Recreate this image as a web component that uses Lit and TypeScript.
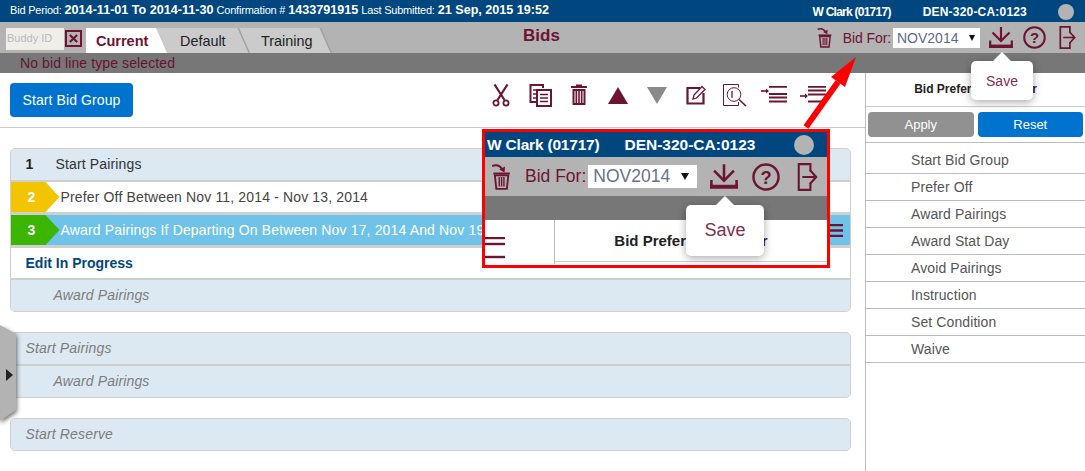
import { LitElement, html, css, svg } from "lit";
import { customElement } from "lit/decorators.js";

const M = "#6e1433";
const box = (w: number, h: number, vw: number, vh: number, body: unknown) =>
  html`<svg width=${w} height=${h} viewBox="0 0 ${vw} ${vh}" fill="none" stroke=${M}>${body}</svg>`;

const scissors = () => box(18, 23, 18, 23, svg`<path d="M2.5 0.5 L12.5 16 M15.5 0.5 L5.5 16" stroke-width="2.2"/><circle cx="4" cy="19" r="2.6" stroke-width="1.8"/><circle cx="14" cy="19" r="2.6" stroke-width="1.8"/>`);
const copy = () => box(23, 23, 23, 23, svg`<path d="M14 4V1H1.5V18H7" stroke-width="2"/><path d="M4 6h5M4 10h3M4 14h3" stroke-width="1.4"/><rect x="8" y="6" width="14" height="16" fill="#fff" stroke-width="2"/><path d="M11 10.5h8M11 14h8M11 17.5h8" stroke-width="1.6"/>`);
const trash = () => box(16, 22, 16, 22, svg`<path d="M0 3h16M5 1.5h6" stroke-width="2"/><rect x="1.5" y="5" width="13" height="16" fill=${M} stroke="none"/><path d="M4 7v12M6.7 7v12M9.3 7v12M12 7v12" stroke="#fff" stroke-width="1"/>`);
const up = () => box(20, 17, 20, 17, svg`<path d="M10 0L20 17H0Z" fill=${M} stroke="none"/>`);
const down = () => box(20, 17, 20, 17, svg`<path d="M0 0H20L10 17Z" fill="#8a8a8a" stroke="none"/>`);
const edit = () => box(20, 20, 20, 20, svg`<path d="M14 3H1.5V18.5H17.5V8" stroke-width="2.2"/><path d="M7 14l1-4L16 1.5l3 3L10.5 13Z" fill="#fff" stroke-width="1.3"/>`);
const search = () => box(25, 23, 25, 23, svg`<path d="M15.5 3.5V0.5H0.5V21.5H15.5V18" stroke-width="1"/><circle cx="11" cy="10.5" r="6.8" stroke-width="1"/><path d="M16 15.5L23 22" stroke-width="1.7"/><path d="M9 7v7" stroke-width="1.3"/>`);
const indentA = () => box(26, 18, 26, 18, svg`<path d="M8 0.8H26M8 8H26M8 11.5H26M8 15.5H26" stroke-width="2"/><path d="M0 5h6" stroke-width="1.6"/><path d="M5 2.5L8 5L5 7.5Z" fill=${M} stroke="none"/>`);
const indentB = () => box(26, 18, 26, 18, svg`<path d="M8 0.8H26M8 4.5H26M8 8.5H26M8 15.5H26" stroke-width="2"/><path d="M0 10h6" stroke-width="1.6"/><path d="M5 7.5L8 10L5 12.5Z" fill=${M} stroke="none"/>`);
const undoTrash = (w = 17, h = 21) => box(w, h, 17, 23, svg`<path d="M1 2.5C5 1 8 2.5 10 6" stroke-width="1.8"/><path d="M7 5.5L11.5 8L12 3Z" fill=${M} stroke="none"/><path d="M2 9h14" stroke-width="1.8"/><path d="M3.3 10.5L4.5 22H13.5L14.7 10.5Z" stroke-width="1.6"/><path d="M7 12v8M9 12v8M11 12v8" stroke-width="1.2"/>`);
const save = (w = 24, h = 21) => box(w, h, 24, 21, svg`<path d="M12 0V13" stroke-width="2.2"/><path d="M3.5 5.5L12 14L20.5 5.5" stroke-width="2.2"/><path d="M1.2 13.5V19H22.8V13.5" stroke-width="2.2"/><path d="M0 19.3H24" stroke-width="3.4"/>`);
const help = (w = 23, h = 23) => box(w, h, 23, 23, svg`<circle cx="11.5" cy="11.5" r="10.3" stroke-width="2"/><text x="11.5" y="17" text-anchor="middle" font-family="Liberation Sans" font-weight="700" font-size="15" fill=${M} stroke="none">?</text>`);
const exit = (w = 17, h = 23) => box(w, h, 17, 24, svg`<path d="M11 7V1H1V23H11V17" stroke-width="1.8"/><path d="M4 12H16M10.5 6L16 12L10.5 18" stroke-width="1.8"/>`);
const burger = (w: number, h: number, ys: number[], t = 2.4) => box(w, h, w, h, ys.map((y) => svg`<path d="M0 ${y}H${w}" stroke-width=${t}/>`));

@customElement("app-root")
export class AppRoot extends LitElement {
  static styles = css`
    :host { display: block; position: relative; width: 1085px; height: 471px; overflow: hidden; background: #fff; font-family: "Liberation Sans", Arial, sans-serif; color: #333; }
    svg { display: block; flex: none; }
    .top { height: 22px; background: #00477f; color: #fff; display: flex; align-items: center; padding: 0 0 3px 10px; box-sizing: border-box; }
    .s { font-size: 11px; letter-spacing: -0.2px; margin-right: 3px; }
    .b { font-size: 12.6px; font-weight: 700; margin-right: 3px; }
    .who { display: flex; align-items: center; align-self: flex-start; margin: 3px 0 0 auto; height: 17px; font-size: 12px; font-weight: 700; letter-spacing: -0.75px; padding-right: 11px; }
    .den { margin-left: 32px; letter-spacing: 0.2px; }
    .dot { width: 16px; height: 16px; border-radius: 50%; background: #b3b3b3; margin-left: 31px; }
    .bar2 { height: 31px; background: #b3b3b3; display: flex; align-items: flex-end; padding-left: 6px; box-sizing: border-box; position: relative; }
    .buddy { width: 58px; height: 22px; background: #efefe8; color: #b9b9b9; font-size: 11px; line-height: 21px; padding-left: 1px; box-sizing: border-box; align-self: flex-start; margin-top: 6px; }
    .x { width: 17px; height: 17px; border: 2px solid #6e1433; box-sizing: border-box; background: #b3b3b3; align-self: flex-start; margin: 8px 0 0 1px; display: flex; align-items: center; justify-content: center; }
    .tabs { display: flex; margin-left: 4px; height: 25px; }
    .tab { height: 25px; display: flex; align-items: center; font-size: 14.4px; color: #222; background: #a0a0a0; position: relative; clip-path: polygon(0 0, calc(100% - 11px) 0, 100% 100%, 0 100%); }
    .tab::before { content: ""; position: absolute; inset: 0; background: #cbcbcb; clip-path: polygon(0 0, calc(100% - 12.5px) 0, calc(100% - 1.5px) 100%, 0 100%); }
    .tab span { position: relative; }
    .tab.on { width: 81px; z-index: 3; background: #fff; padding-left: 10px; box-sizing: border-box; }
    .tab.on::before { background: #fff; }
    .tab.on span { font-weight: 700; color: #6e1433; font-size: 14.5px; }
    .tab.d { width: 94px; margin-left: -11px; padding-left: 24px; box-sizing: border-box; z-index: 2; }
    .tab.t { width: 93px; margin-left: -11px; padding-left: 22px; box-sizing: border-box; z-index: 1; }
    .title { position: absolute; left: 523px; top: 4px; font-size: 17px; font-weight: 700; color: #6e1433; }
    .tools { display: flex; align-items: center; margin-left: auto; align-self: stretch; padding-right: 9px; }
    .bidfor { font-size: 14px; color: #6e1433; margin-left: 10px; letter-spacing: -0.1px; }
    .sel { width: 87px; height: 20px; background: #fff; margin: 0 9px 0 2px; display: flex; align-items: center; justify-content: space-between; font-size: 14px; color: #5d6a8c; padding: 0 5px 0 4px; box-sizing: border-box; }
    .caret { width: 0; height: 0; border: 3.5px solid transparent; border-top: 6px solid #111; border-bottom: 0; }
    .gap1 { margin-left: 10px; }
    .gap2 { margin-left: 13px; }
    .bar3 { height: 20px; background: #777; color: #651334; font-size: 14px; line-height: 20px; padding-left: 20px; letter-spacing: 0.1px; }
    .main { display: flex; height: 398px; }
    .left { width: 865px; flex: none; }
    .tb { height: 55px; border-bottom: 1px solid #ccc; box-sizing: border-box; display: flex; align-items: flex-start; justify-content: space-between; padding: 10px 32.5px 0 10px; }
    .start { width: 123px; height: 34px; border-radius: 4px; background: #0073cf; color: #fff; font-size: 14px; letter-spacing: 0.1px; display: flex; align-items: center; justify-content: center; }
    .icons { display: flex; }
    .cell { width: 39px; height: 24px; display: flex; align-items: center; justify-content: center; }
    .groups { padding: 20px 14px 0 9.5px; display: flex; flex-direction: column; }
    .group { border: 1px solid #d0d0d0; border-radius: 5px; overflow: hidden; margin-bottom: 20px; background: #dce8f2; }
    .r { height: 33px; display: flex; align-items: center; font-size: 14px; letter-spacing: 0.15px; position: relative; box-sizing: border-box; white-space: nowrap; }
    .h31 { height: 31px; padding-bottom: 1px; }
    .h32 { height: 32px; }
    .sep { border-top: 2px solid #cfcfcf; }
    .sep3 { border-top: 3px solid #cfcfcf; }
    .blue { background: #dce8f2; }
    .w { background: #fff; }
    .sky { background: #6fc3e8; color: #fff; }
    .num { width: 45px; padding-left: 15px; box-sizing: border-box; font-weight: 700; color: #222; }
    .ital { font-style: italic; color: #7d7d7d; }
    .i1 { padding-left: 15px; }
    .i2 { padding: 0 0 1px 43px; }
    .badge { width: 49px; align-self: stretch; display: flex; align-items: center; padding-left: 17px; box-sizing: border-box; color: #fff; font-weight: 700; clip-path: polygon(0 0, 35px 0, 49px 50%, 35px 100%, 0 100%); margin-right: 1px; flex: none; }
    .yellow { background: #f2c500; }
    .green { background: #3cb500; }
    .gray { color: #444; }
    .edit { font-weight: 700; color: #00477f; padding-left: 15px; letter-spacing: 0; }
    .rb { position: absolute; right: 7px; top: 9px; }
    .side { flex: 1; border-left: 1px solid #bbb; box-sizing: border-box; }
    .sh { height: 34px; border-bottom: 1px solid #ccc; box-sizing: border-box; padding-bottom: 2px; display: flex; align-items: center; justify-content: center; font-size: 12px; font-weight: 700; color: #222; }
    .btns { display: flex; gap: 4px; padding: 5px 2px; height: 36px; box-sizing: border-box; border-bottom: 1px solid #bbb; }
    .btn { flex: 1; height: 25px; border-radius: 4px; color: #fff; font-size: 13px; display: flex; align-items: center; justify-content: center; }
    .apply { background: #919191; }
    .reset { background: #0073cf; }
    .list { padding-top: 4px; }
    .li { height: 27px; border-bottom: 1px solid #bbb; box-sizing: border-box; padding-left: 45px; font-size: 14px; letter-spacing: 0.1px; color: #555; line-height: 26px; }
    .tip { position: absolute; background: #fff; border-radius: 5px; box-shadow: 0 2px 8px rgba(0,0,0,.35); color: #7f2f4f; display: flex; align-items: center; justify-content: center; z-index: 5; }
    .tip::before { content: ""; position: absolute; left: 50%; top: -9px; margin-left: -10px; border: 10px solid transparent; border-top: 0; border-bottom: 10px solid #fff; }
    .tip1 { left: 971px; top: 61px; width: 62px; height: 39px; font-size: 14px; }
    .tip2 { left: 686px; top: 205px; width: 78px; height: 51px; font-size: 18px; z-index: 7; }
    .shot { position: absolute; left: 482px; top: 129px; width: 348px; height: 139px; border: 3px solid #f00; box-sizing: border-box; background: #fff; z-index: 6; overflow: hidden; }
    .st { height: 25px; background: #00477f; color: #fff; display: flex; align-items: center; font-size: 15.5px; font-weight: 700; padding-left: 2px; letter-spacing: -0.2px; white-space: nowrap; }
    .den2 { margin-left: 25px; letter-spacing: 0; }
    .dot2 { width: 20px; height: 20px; border-radius: 50%; background: #b3b3b3; margin-left: 39px; flex: none; }
    .sg { height: 39px; background: #b3b3b3; display: flex; align-items: center; padding-left: 6px; }
    .bf { font-size: 17.5px; color: #6e1433; margin-left: 14px; }
    .sl { width: 109px; height: 23px; background: #fff; margin: 0 13px 0 2px; display: flex; align-items: center; justify-content: space-between; padding: 0 5px; box-sizing: border-box; font-size: 17.5px; color: #6a7088; }
    .sl .caret { border-width: 4px; border-top-width: 7px; margin-right: 3px; border-bottom: 0; }
    .gap3 { margin-left: 14px; }
    .gap4 { margin-left: 17px; }
    .sd { height: 24px; background: #777; }
    .sb { display: flex; height: 44px; background: #fff; }
    .l { width: 70px; flex: none; border-right: 1px solid #bbb; padding-top: 17px; box-sizing: border-box; }
    .rr { flex: 1; }
    .hh { height: 42px; border-bottom: 1px solid #ccc; box-sizing: border-box; display: flex; align-items: center; justify-content: center; font-size: 15px; font-weight: 700; color: #222; white-space: nowrap; }
    .arrow { position: absolute; left: 795px; top: 50px; z-index: 8; }
    .handle { position: absolute; left: 0; top: 322px; z-index: 4; filter: drop-shadow(1px 2px 2px rgba(0,0,0,.55)); }
  `;

  render() {
    const list = ["Start Bid Group", "Prefer Off", "Award Pairings", "Award Stat Day", "Avoid Pairings", "Instruction", "Set Condition", "Waive"];
    return html`
      <div class="top">
        <span class="s">Bid Period:</span><span class="b">2014-11-01 To 2014-11-30</span>
        <span class="s">Confirmation #</span><span class="b">1433791915</span>
        <span class="s">Last Submitted:</span><span class="b">21 Sep, 2015 19:52</span>
        <div class="who"><span>W Clark (01717)</span><span class="den">DEN-320-CA:0123</span><span class="dot"></span></div>
      </div>
      <div class="bar2">
        <div class="buddy">Buddy ID</div>
        <div class="x">${box(9, 9, 10, 10, svg`<path d="M1 1L9 9M9 1L1 9" stroke-width="2.4"/>`)}</div>
        <div class="tabs">
          <div class="tab on"><span>Current</span></div>
          <div class="tab d"><span>Default</span></div>
          <div class="tab t"><span>Training</span></div>
        </div>
        <div class="title">Bids</div>
        <div class="tools">
          ${undoTrash()}
          <span class="bidfor">Bid For:</span>
          <div class="sel"><span>NOV2014</span><i class="caret"></i></div>
          ${save()}
          <span class="gap1">${help()}</span>
          <span class="gap2">${exit()}</span>
        </div>
      </div>
      <div class="bar3">No bid line type selected</div>
      <div class="main">
        <div class="left">
          <div class="tb">
            <div class="start">Start Bid Group</div>
            <div class="icons">
              ${[scissors, copy, trash, up, down, edit, search, indentA, indentB].map((i) => html`<div class="cell">${i()}</div>`)}
            </div>
          </div>
          <div class="groups">
            <div class="group">
              <div class="r h31 blue"><span class="num">1</span>Start Pairings</div>
              <div class="r h32 w sep gray"><div class="badge yellow">2</div>Prefer Off Between Nov 11, 2014 - Nov 13, 2014</div>
              <div class="r sky sep3"><div class="badge green">3</div>Award Pairings If Departing On Between Nov 17, 2014 And Nov 19, 2014
                <span class="rb">${burger(14, 13, [1, 6.5, 12])}</span></div>
              <div class="r w sep3 edit">Edit In Progress</div>
              <div class="r blue sep ital i2">Award Pairings</div>
            </div>
            <div class="group">
              <div class="r h31 blue ital i1">Start Pairings</div>
              <div class="r blue sep ital i2">Award Pairings</div>
            </div>
            <div class="group">
              <div class="r h31 blue ital i1">Start Reserve</div>
            </div>
          </div>
        </div>
        <div class="side">
          <div class="sh">Bid Preference Editor</div>
          <div class="btns"><div class="btn apply">Apply</div><div class="btn reset">Reset</div></div>
          <div class="list">${list.map((t) => html`<div class="li">${t}</div>`)}</div>
        </div>
      </div>

      <div class="tip tip1">Save</div>

      <svg class="arrow" width="70" height="85" viewBox="0 0 70 85" fill="none">
        <path d="M11 77L43 32" stroke="#f00" stroke-width="6"/>
        <path d="M61 7L36 27L50 37Z" fill="#f00"/>
      </svg>

      <div class="shot">
        <div class="st"><span>W Clark (01717)</span><span class="den2">DEN-320-CA:0123</span><span class="dot2"></span></div>
        <div class="sg">
          ${undoTrash(20, 27)}
          <span class="bf">Bid For:</span>
          <div class="sl"><span>NOV2014</span><i class="caret"></i></div>
          ${save(28, 29)}
          <span class="gap3">${help(28, 28)}</span>
          <span class="gap4">${exit(21, 28)}</span>
        </div>
        <div class="sd"></div>
        <div class="sb">
          <div class="l">${burger(20, 22, [1, 7, 20])}</div>
          <div class="rr"><div class="hh">Bid Preference Editor</div></div>
        </div>
      </div>
      <div class="tip tip2">Save</div>

      <svg class="handle" width="22" height="110" viewBox="0 0 22 110" fill="none">
        <path d="M0 3L16 12V88L0 99Z" fill="#b3b3b3"/>
        <path d="M6 47L13 53L6 59Z" fill="#222"/>
      </svg>
    `;
  }
}
